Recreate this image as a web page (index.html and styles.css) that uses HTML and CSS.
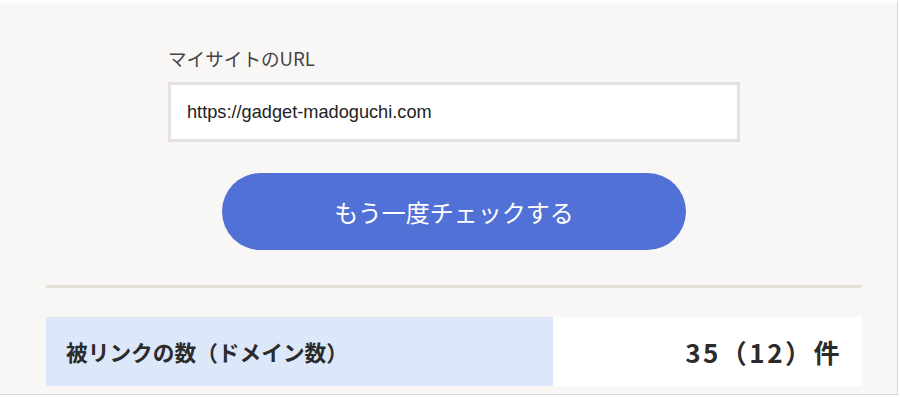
FILE: index.html
```html
<!DOCTYPE html>
<html lang="ja">
<head>
  <meta charset="UTF-8" />
  <title>被リンクチェック</title>
  <meta name="viewport" content="width=device-width, initial-scale=1.0" />
  <link rel="stylesheet" href="styles.css">
</head>
<body>
  <div class="frame">
    <form class="check-form">
      <label class="field-label" for="siteUrl">マイサイトのURL</label>
      <input type="text" id="siteUrl" class="url-input" value="https://gadget-madoguchi.com" />
      <button type="button" class="check-btn">もう一度チェックする</button>
    </form>

    <hr class="divider" />

    <div class="result-row">
      <div class="result-label">被リンクの数（ドメイン数）</div>
      <div class="result-value">35（12）件</div>
    </div>
  </div>
</body>
</html>
```

FILE: styles.css
```css
:root {
  --bg: #f8f7f5;
  --frame-line: #d9d9d9;
  --text: #444;
  --text-strong: #2b2b2b;
  --primary: #5271d6;
  --input-line: #e6e1e1;
  --divider: #e3e0d4;
  --cell-blue: #dce8f9;
}

body {
  margin: 0;
  background-color: #fff;
  font-family: "Noto Sans CJK JP", "Noto Sans", sans-serif;
  color: var(--text);
}

.frame {
  width: 898px;
  height: 395px;
  box-sizing: border-box;
  background-color: var(--bg);
  border-top: 3px solid #fdfdfc;
  border-right: 1px solid var(--frame-line);
  border-bottom: 1px solid var(--frame-line);
  padding-top: 41px;
}

.check-form {
  width: 572px;
  margin-left: 168px;
  display: flex;
  flex-direction: column;
  align-items: center;
}

.field-label {
  align-self: flex-start;
  font-size: 18.6px;
  line-height: 27px;
  margin-bottom: 11px;
  color: #444;
}

.url-input {
  width: 100%;
  height: 60px;
  box-sizing: border-box;
  border: 3px solid var(--input-line);
  background-color: #fff;
  padding: 0 16px;
  font-family: "Liberation Sans", Arial, sans-serif;
  font-size: 18.2px;
  color: #222;
  outline: none;
}

.check-btn {
  margin-top: 31px;
  width: 464px;
  height: 77px;
  border: none;
  border-radius: 40px;
  background-color: var(--primary);
  color: #fff;
  font-family: "Noto Sans CJK JP", sans-serif;
  font-size: 24px;
  cursor: pointer;
}

.divider {
  width: 816px;
  margin: 35px 0 0 46px;
  border: none;
  height: 3px;
  background-color: var(--divider);
}

.result-row {
  width: 816px;
  height: 69px;
  margin: 29px 0 0 46px;
  display: grid;
  grid-template-columns: 507px 1fr;
}

.result-label {
  background-color: var(--cell-blue);
  display: flex;
  align-items: center;
  padding-left: 20px;
  font-size: 21.7px;
  font-weight: 700;
  color: var(--text-strong);
}

.result-value {
  background-color: #fff;
  display: flex;
  align-items: center;
  justify-content: flex-end;
  padding-right: 20px;
  font-size: 26px;
  letter-spacing: 2.5px;
  font-weight: 700;
  color: var(--text-strong);
}
```
